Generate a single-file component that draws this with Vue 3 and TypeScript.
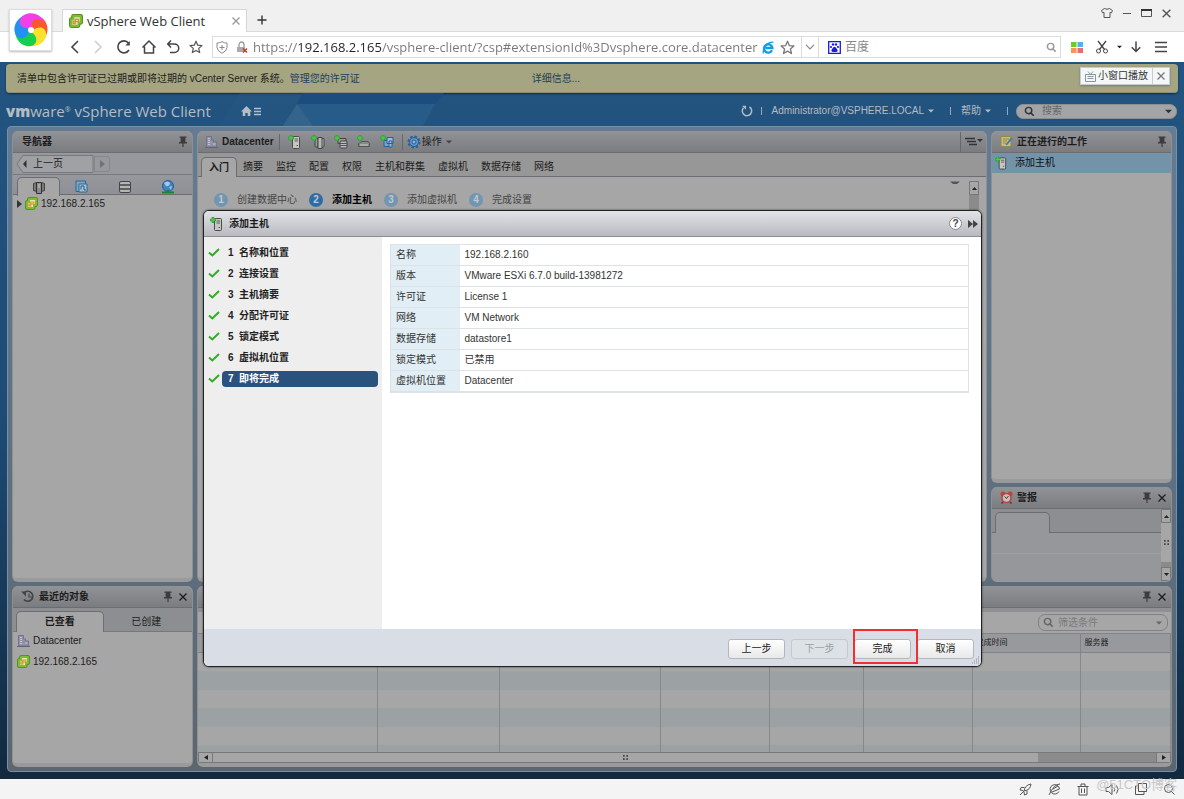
<script setup lang="ts">
import { ref } from 'vue'

interface Detail { label: string; value: string }
interface Petal { color: string; angle: number }

const url = ref('https://192.168.2.165/vsphere-client/?csp#extensionId%3Dvsphere.core.datacenter')
const steps: string[] = ['名称和位置', '连接设置', '主机摘要', '分配许可证', '锁定模式', '虚拟机位置', '即将完成']
const currentStep = ref(6)
const details: Detail[] = [
  { label: '名称', value: '192.168.2.160' },
  { label: '版本', value: 'VMware ESXi 6.7.0 build-13981272' },
  { label: '许可证', value: 'License 1' },
  { label: '网络', value: 'VM Network' },
  { label: '数据存储', value: 'datastore1' },
  { label: '锁定模式', value: '已禁用' },
  { label: '虚拟机位置', value: 'Datacenter' },
]
const tabs: string[] = ['入门', '摘要', '监控', '配置', '权限', '主机和群集', '虚拟机', '数据存储', '网络']
const activeTab = ref(0)
const guide: string[] = ['创建数据中心', '添加主机', '添加虚拟机', '完成设置']
const taskColumns: string[] = ['', '', '', '', '', '', '完成时间', '服务器']
const petals: Petal[] = [
  { color: '#f8582c', angle: 47 },
  { color: '#fbe02c', angle: 119 },
  { color: '#16cf4c', angle: 191 },
  { color: '#2292f2', angle: 263 },
  { color: '#f23fe6', angle: 335 },
]
</script>

<template>
  <div class="browser">
    <svg class="defs" width="0" height="0" aria-hidden="true">
      <symbol id="pin" viewBox="0 0 10 12"><path d="M1.5 .5h7v1.3H7.4v4.2H9v1.400H5.600V11H4.400V7.400H1V6h1.600V1.800H1.500z" fill="#3c3c3e" /></symbol>
      <symbol id="close" viewBox="0 0 10 10"><path d="M1.500 1.500l7 7M8.500 1.500l-7 7" stroke="currentColor" stroke-width="1.300" fill="none" /></symbol>
      <symbol id="lens" viewBox="0 0 12 12"><circle cx="5" cy="5" r="3.500" fill="none" stroke="currentColor" stroke-width="1.600" /><path d="M7.600 7.600l3 3" stroke="currentColor" stroke-width="1.800" /></symbol>
      <symbol id="vcenter" viewBox="0 0 13 13">
        <path d="M4 .5h7q1.500 0 1.500 1.500v6q0 1.500-1.500 1.500h-1V11q0 1.500-1.500 1.500H2Q.5 12.500.5 11V5Q.5 3.500 2 3.500h.5V2Q2.500.5 4 .5z" fill="#7fbc33" stroke="#56931c" />
        <path d="M5 3h5v4H8v3H3V6h2z" fill="#e9e2c4" /><path d="M3.800 9V7h2V5h3v2h-3v2z" fill="none" stroke="#dd9020" stroke-width="1.100" />
      </symbol>
      <symbol id="plus" viewBox="0 0 6 6"><path d="M3 0v6M0 3h6" stroke="#2a9a30" stroke-width="2.600" /><path d="M3 .6v4.800M.6 3h4.800" stroke="#4fc94c" stroke-width="1.300" /></symbol>
      <symbol id="host" viewBox="0 0 14 14">
        <rect x="4.500" y="1.500" width="7" height="12" rx="1" fill="#c6c6c2" stroke="#4a4a48" /><path d="M6.500 4h3.500M6.500 6h3.500M8.500 10.500h1.500" stroke="#5a5a58" /><use href="#plus" x="0" y="0" width="6" height="6" />
      </symbol>
      <symbol id="building" viewBox="0 0 13 13"><path d="M1.500 12V1.500h5V5h2v2h3v5z" fill="#9292a6" stroke="#73738a" /><path d="M3 3.500h2M3 5.500h2M3 7.500h2M3 9.500h2M8 9h2.500" stroke="#c4c4d0" /><path d="M0 12.500h13" stroke="#62627a" /></symbol>
      <symbol id="caret" viewBox="0 0 6 4"><path d="M0 .5h6L3 3.500z" fill="currentColor" /></symbol>
      <symbol id="grip" viewBox="0 0 6 6"><path d="M0 0h2v2H0zM4 0h2v2H4zM0 4h2v2H0zM4 4h2v2H4z" fill="#444" /></symbol>
      <symbol id="star" viewBox="0 0 14 14"><path d="M7 1.200l1.700 4 4.300.4-3.300 2.800 1 4.200L7 10.400l-3.700 2.200 1-4.200L1 5.600l4.300-.4z" fill="none" stroke="currentColor" stroke-width="1.200" stroke-linejoin="round" /></symbol>
    </svg>

    <header class="chrome">
      <div class="tabstrip">
        <button class="brand" aria-label="浏览器菜单">
          <svg width="36" height="36" viewBox="-18 -18 36 36">
            <path v-for="p in petals" :key="p.color" d="M-1 -2C-10 -6 -9 -15 0 -16.500C8 -17 15 -11 16 -1C12 -9 4 -10 2 -2z" :fill="p.color" :transform="`rotate(${p.angle})`" />
            <circle r="3" fill="#fff" />
          </svg>
        </button>
        <div class="page-tab">
          <svg width="14" height="14"><use href="#vcenter" /></svg>
          <span>vSphere Web Client</span>
          <button aria-label="关闭标签页"><svg width="10" height="10"><use href="#close" /></svg></button>
        </div>
        <button class="new-tab" aria-label="新建标签页"><svg width="10" height="10" viewBox="0 0 10 10"><path d="M5 .5v9M.5 5h9" stroke="#333" stroke-width="1.400" /></svg></button>
        <div class="window-tools">
          <button aria-label="皮肤"><svg width="12" height="12" viewBox="0 0 12 12"><path d="M3.500 1.500q2.500 1.600 5 0l3 2-1 2.300-1.500-.5v5.200H3V5.300l-1.500.5-1-2.300z" fill="none" stroke="#555" /></svg></button>
          <button aria-label="最小化"><svg width="10" height="12" viewBox="0 0 10 12"><path d="M1 6.500h8" stroke="#555" /></svg></button>
          <button aria-label="最大化"><svg width="11" height="12" viewBox="0 0 11 12"><path d="M.5 2.500h10v7H.5z" fill="none" stroke="#555" /><path d="M0 3h11" stroke="#333" stroke-width="2" /></svg></button>
          <button class="muted-dark" aria-label="关闭"><svg width="11" height="11"><use href="#close" /></svg></button>
        </div>
      </div>
      <div class="toolbar">
        <div class="nav-tools">
          <button aria-label="后退"><svg width="14" height="16" viewBox="0 0 14 16"><path d="M10 2L4 8l6 6" fill="none" stroke="#444" stroke-width="1.600" /></svg></button>
          <button aria-label="前进"><svg width="14" height="16" viewBox="0 0 14 16"><path d="M4 2l6 6-6 6" fill="none" stroke="#ccc" stroke-width="1.500" /></svg></button>
          <button class="reload" aria-label="刷新"><svg width="16" height="16" viewBox="0 0 16 16"><path d="M13 11A6 6 0 1 1 12.500 4" fill="none" stroke="#444" stroke-width="1.600" /><path d="M13.800 2v4.500H9.300z" fill="#444" /></svg></button>
          <button aria-label="主页"><svg width="16" height="16" viewBox="0 0 16 16"><path d="M1.500 8.500L8 2l6.500 6.500M3.500 7.500v6.500h9V7.500" fill="none" stroke="#444" stroke-width="1.500" /></svg></button>
          <button aria-label="恢复"><svg width="14" height="16" viewBox="0 0 14 16"><path d="M5 1.500L1.700 5 5 8.500M2 5h6.500a4.200 4.200 0 0 1 0 8.500H4" fill="none" stroke="#444" stroke-width="1.500" /></svg></button>
          <button class="muted-dark" aria-label="收藏夹"><svg width="14" height="14"><use href="#star" /></svg></button>
        </div>
        <div class="omnibox">
          <svg width="12" height="13" viewBox="0 0 12 13"><path d="M6 .7q2.500 1.500 5 1.300v4.500Q10.500 10.500 6 12.300 1.500 10.500 1 6.500V2q2.500.2 5-1.300z" fill="none" stroke="#888" /><path d="M6 4v5M3.500 6.500h5" stroke="#888" /></svg>
          <svg class="lock" width="12" height="13" viewBox="0 0 12 13"><path d="M3 6V4a2.500 3 0 0 1 5 0v2" fill="none" stroke="#999" stroke-width="1.300" /><rect x="1" y="6" width="8" height="5" fill="#aaa" /><path d="M7 7.500l4 4M11 7.500l-4 4" stroke="#e02a2a" stroke-width="1.400" /></svg>
          <input v-model="url" class="url" type="text" aria-label="网址" spellcheck="false">
          <svg width="12" height="13" viewBox="0 0 12 13"><path d="M10 9.300A4.200 4.200 0 1 1 10.400 7H3.500" fill="none" stroke="#139be8" stroke-width="2.300" /><path d="M11.500 1.300Q9 .5 5 3 1 6.500 1.200 12.500" fill="none" stroke="#139be8" stroke-width="1.200" /></svg>
          <button class="fav" aria-label="收藏"><svg width="15" height="15"><use href="#star" /></svg></button>
          <button class="expand" aria-label="展开"><svg width="10" height="6" viewBox="0 0 10 6"><path d="M1 .8l4 4 4-4" fill="none" stroke="#888" stroke-width="1.200" /></svg></button>
          <svg class="paw" width="13" height="13" viewBox="0 0 13 13"><path d="M.7.700h11.600v11.600H.7z" fill="#fff" stroke="#1a1ae6" stroke-width="1.300" /><g fill="#1a1ae6"><circle cx="3" cy="6" r="1.100" /><circle cx="5" cy="3.500" r="1.200" /><circle cx="8" cy="3.500" r="1.200" /><circle cx="10" cy="6" r="1.100" /><path d="M6.500 5.700q1.200 0 1.900 1.500l1.200 1.700q.3 2-1.500 2H4.900q-1.800 0-1.500-2l1.200-1.700q.7-1.500 1.900-1.500z" /></g></svg>
          <input class="engine" type="text" placeholder="百度" aria-label="百度搜索">
          <button class="go" aria-label="搜索"><svg width="11" height="11"><use href="#lens" /></svg></button>
        </div>
        <div class="ext-tools">
          <button aria-label="应用"><svg width="12" height="12" viewBox="0 0 12 12"><path d="M0 1h5.500v5H0z" fill="#6fcb1e" /><path d="M6.500 1H12v5H6.500z" fill="#4fb4ec" /><path d="M0 7h5.500v5H0z" fill="#f7945a" /><path d="M6.500 7H12v5H6.500z" fill="#ee6a78" /></svg></button>
          <button class="cut" aria-label="截图"><svg width="14" height="14" viewBox="0 0 14 14"><path d="M3 1l6.500 8.500M11 1L4.500 9.500" stroke="#444" stroke-width="1.300" /><circle cx="3.500" cy="11" r="2" fill="none" stroke="#444" /><circle cx="10.500" cy="11" r="2" fill="none" stroke="#444" /></svg></button>
          <button class="drop" aria-label="更多截图选项"><svg width="5" height="4"><use href="#caret" /></svg></button>
          <button class="down" aria-label="下载"><svg width="12" height="14" viewBox="0 0 12 14"><path d="M6 1.500v10M1.800 7.300L6 11.500l4.200-4.200" fill="none" stroke="#444" stroke-width="1.500" /></svg></button>
          <button class="menu" aria-label="菜单"><svg width="12" height="12" viewBox="0 0 12 12"><path d="M0 1.500h12M0 6h12M0 10.500h12" stroke="#444" stroke-width="1.500" /></svg></button>
        </div>
      </div>
    </header>

    <main class="app">
      <div class="notice">
        <span class="notice-text">清单中包含许可证已过期或即将过期的 vCenter Server 系统。</span>
        <a href="#licenses">管理您的许可证</a>
        <a class="more" href="#details">详细信息...</a>
      </div>

      <div class="masthead">
        <svg class="facets" viewBox="0 0 1184 33" preserveAspectRatio="none" aria-hidden="true">
          <path d="M240 0h63l-20 33h-63z" fill="#295b84" opacity=".4" /><path d="M303 0h141l-9 11H297z" fill="#1b4d7f" /><path d="M297 11h138l-12 22H283z" fill="#285c88" /><path d="M297 11l16 22h-30z" fill="#34648c" />
        </svg>
        <h1><b>vm</b>ware<sup>®</sup></h1>
        <span class="product">vSphere Web Client</span>
        <button class="home" aria-label="主页"><svg width="20" height="12" viewBox="0 0 20 12"><path d="M0 6.500L5.500 1 11 6.500H9.300V11H6.700V8H4.300v3H1.700V6.500z" fill="#b4bcc4" /><path d="M13 3.500h7M13 6.500h7M13 9.500h7" stroke="#b4bcc4" stroke-width="1.500" /></svg></button>
        <div class="session">
          <button aria-label="刷新"><svg width="12" height="12" viewBox="0 0 12 12"><path d="M8.500 2A4.700 4.700 0 1 1 2.500 2.800" fill="none" stroke="#b4bcc4" stroke-width="1.500" /><path d="M1 .8h4v4z" fill="#b4bcc4" /></svg></button>
          <i></i>
          <button class="user">Administrator@VSPHERE.LOCAL <svg width="6" height="4"><use href="#caret" /></svg></button>
          <i></i>
          <button class="help">帮助 <svg width="6" height="4"><use href="#caret" /></svg></button>
          <i></i>
          <label class="search"><svg width="11" height="11"><use href="#lens" /></svg><input type="search" placeholder="搜索" aria-label="搜索"><svg width="7" height="5"><use href="#caret" /></svg></label>
        </div>
      </div>

      <div class="frame">
        <section class="panel navigator">
          <header class="bar"><h2>导航器</h2><button class="tool" aria-label="固定"><svg width="10" height="12"><use href="#pin" /></svg></button></header>
          <div class="history">
            <button class="back"><svg width="78" height="18" viewBox="0 0 78 18" aria-hidden="true"><path d="M7 .5h70v17H7L1 9z" fill="#a0a1a4" stroke="#77787c" /><path d="M10.500 5v8L7 9z" fill="#333" /></svg><span>上一页</span></button>
            <button class="next" aria-label="前进" disabled><svg width="5" height="8" viewBox="0 0 5 8"><path d="M0 0l5 4-5 4z" fill="#717276" /></svg></button>
          </div>
          <div class="icon-tabs">
            <button class="on" aria-label="主机和群集"><svg width="12" height="13" viewBox="0 0 12 13"><path d="M.5 2.500l3-1v9l-3-1zM8.500 1.500l3 1v7l-3 1z" fill="#777" stroke="#444" /><path d="M3.500 1.500h5v11h-5z" fill="#8a8a8a" stroke="#333" /><path d="M5 4h2M5 6h2" stroke="#ccc" /></svg></button>
            <button aria-label="虚拟机和模板"><svg width="13" height="13" viewBox="0 0 13 13"><path d="M1 1h9.500v10.500H1z" fill="#7ba5c6" stroke="#2d688f" /><path d="M4 4h8v8H4z" fill="#a9c3d4" stroke="#2d688f" /><path d="M6 9.500V6h3v4h2" fill="none" stroke="#225e88" /></svg></button>
            <button aria-label="存储"><svg width="12" height="12" viewBox="0 0 12 12"><rect x=".5" y=".5" width="11" height="11" rx="1.500" fill="#b5b5b5" stroke="#444" /><path d="M1 4h10M1 8h10" stroke="#444" stroke-width="1.300" /></svg></button>
            <button aria-label="网络"><svg width="14" height="14" viewBox="0 0 14 14"><circle cx="7" cy="6" r="5.500" fill="#4383c4" stroke="#295b98" /><path d="M3 3q4-3 6 0-1 4-4 3zM8 7l3-1-1 4z" fill="#a5c9e7" /><path d="M1 12.500h12M7 10v3" stroke="#17872a" stroke-width="2" /></svg></button>
          </div>
          <ul class="objects tree"><li><svg width="5" height="8" viewBox="0 0 5 8"><path d="M0 0l5 4-5 4z" fill="#333" /></svg><svg width="13" height="13"><use href="#vcenter" /></svg>192.168.2.165</li></ul>
        </section>

        <section class="panel inventory">
          <header class="bar">
            <svg width="13" height="13"><use href="#building" /></svg><h2>Datacenter</h2><i></i>
            <div class="actions">
              <button aria-label="添加主机"><svg width="14" height="14"><use href="#host" /></svg></button>
              <button aria-label="新建群集"><svg width="14" height="14" viewBox="0 0 14 14"><path d="M4 3.500h3v9l-3-1z" fill="#999" stroke="#444" /><path d="M7 2.500h4v11H7zM11 3.500h2v8l-2 1" fill="#b7b7b7" stroke="#444" /><use href="#plus" width="6" height="6" /></svg></button>
              <button aria-label="新建数据存储"><svg width="14" height="14" viewBox="0 0 14 14"><path d="M4 3.500h8v5H4z" fill="#999" stroke="#444" /><rect x="6" y="6" width="7" height="7" rx="1" fill="#bbb" stroke="#444" /><path d="M6 8.500h7M6 10.500h7" stroke="#555" /><use href="#plus" width="6" height="6" /></svg></button>
              <button aria-label="新建交换机"><svg width="14" height="14" viewBox="0 0 14 14"><path d="M2 8.500l2-2h7l1.500 2v3h-11v-3z" fill="#888" stroke="#555" /><path d="M3 10h8" stroke="#ccc" /><use href="#plus" width="6" height="6" /></svg></button>
              <button aria-label="新建虚拟机"><svg width="14" height="14" viewBox="0 0 14 14"><path d="M4 5.500h6v6H4z" fill="#7ca2c4" stroke="#23639c" /><path d="M7 2.500h6v6H7zM9 6h3v6H9z" fill="#9dbbd4" stroke="#23639c" /><use href="#plus" width="6" height="6" /></svg></button>
            </div>
            <i></i>
            <button class="operate"><svg width="14" height="14" viewBox="-7 -7 14 14"><circle r="5" fill="none" stroke="#275f98" stroke-width="3" stroke-dasharray="2.200 1.700" /><circle r="4.500" fill="#5f97cb" stroke="#275f98" /><circle r="2" fill="#8fb2d2" stroke="#275f98" /></svg>操作<svg width="6" height="4"><use href="#caret" /></svg></button>
            <button class="view" aria-label="视图选项"><svg width="18" height="9" viewBox="0 0 18 9"><path d="M0 1.500h10M2 4.500h9M4 7.500h8" stroke="#333" stroke-width="1.300" /><path d="M12 2h6l-3 3z" fill="#333" /></svg></button>
          </header>
          <nav class="tabs"><button v-for="(t, i) in tabs" :key="t" :class="{ on: i === activeTab }" @click="activeTab = i">{{ t }}</button></nav>
          <div class="guide">
            <ol><li v-for="(g, i) in guide" :key="g" :class="{ on: i === 1 }"><b>{{ i + 1 }}</b>{{ g }}</li></ol>
            <svg class="fold" width="10" height="4" viewBox="0 0 10 4"><path d="M0 .5h10L7 3H3z" fill="#555" /></svg>
            <div class="vscroll"><span><svg width="5" height="3" viewBox="0 0 5 3"><path d="M0 3l2.500-3L5 3z" fill="#222" /></svg></span></div>
          </div>
        </section>

        <div class="side">
          <section class="panel work">
            <header class="bar"><svg width="13" height="13" viewBox="0 0 13 13"><path d="M1 1.500h10v10H1z" fill="#c9bf72" stroke="#8f8a4e" /><path d="M3 4h6M3 6h4M3 8h3" stroke="#8f8a4e" /><path d="M5.500 9.500l5.500-7 1.500 1.300-5.500 6.500z" fill="#3f79b0" /></svg><h2>正在进行的工作</h2><button class="tool" aria-label="固定"><svg width="10" height="12"><use href="#pin" /></svg></button></header>
            <ul><li><svg width="13" height="14"><use href="#host" /></svg>添加主机</li></ul>
          </section>
          <section class="panel alerts">
            <header class="bar"><svg width="13" height="13" viewBox="0 0 13 13"><circle cx="3" cy="3" r="2.500" fill="#b7463f" /><circle cx="10" cy="3" r="2.500" fill="#b7463f" /><path d="M3 11l-1.500 1.500M10 11l1.500 1.500" stroke="#7a2a26" stroke-width="1.500" /><circle cx="6.500" cy="7" r="4.500" fill="#c9c0bd" stroke="#b7463f" stroke-width="1.600" /><path d="M4.500 5.500l2 2 2-2.500" fill="none" stroke="#333" /></svg><h2>警报</h2><button class="tool" aria-label="固定"><svg width="10" height="12"><use href="#pin" /></svg></button><button class="shut" aria-label="关闭"><svg width="10" height="10"><use href="#close" /></svg></button></header>
            <div class="alert-body">
              <div class="alert-list"><div class="alert-tabs"><span></span></div><p></p></div>
              <div class="vscroll tall"><span><svg width="5" height="3" viewBox="0 0 5 3"><path d="M0 3l2.500-3L5 3z" fill="#222" /></svg></span><em><svg width="5" height="5"><use href="#grip" /></svg></em><span><svg width="5" height="3" viewBox="0 0 5 3"><path d="M0 0l2.500 3L5 0z" fill="#222" /></svg></span></div>
            </div>
          </section>
        </div>

        <section class="panel recent">
          <header class="bar"><svg width="14" height="13" viewBox="0 0 14 13"><path d="M3 3A5 5 0 1 1 3 9.500" fill="none" stroke="#444" stroke-width="1.700" /><path d="M0 1.500h5v5z" fill="#444" /><path d="M8 3.500v3.500h3" fill="none" stroke="#444" stroke-width="1.200" /></svg><h2>最近的对象</h2><button class="tool" aria-label="固定"><svg width="10" height="12"><use href="#pin" /></svg></button><button class="shut" aria-label="关闭"><svg width="10" height="10"><use href="#close" /></svg></button></header>
          <div class="recent-tabs"><button class="on">已查看</button><button>已创建</button></div>
          <ul class="objects"><li><svg width="13" height="13"><use href="#building" /></svg>Datacenter</li><li><svg width="13" height="13"><use href="#vcenter" /></svg>192.168.2.165</li></ul>
        </section>

        <section class="panel tasks">
          <header class="bar"><button class="tool" aria-label="固定"><svg width="10" height="12"><use href="#pin" /></svg></button><button class="shut" aria-label="关闭"><svg width="10" height="10"><use href="#close" /></svg></button></header>
          <div class="filter-row"><label class="filter"><svg width="11" height="11"><use href="#lens" /></svg><input type="search" placeholder="筛选条件" aria-label="筛选条件"><svg width="6" height="4"><use href="#caret" /></svg></label></div>
          <div class="grid-wrap">
            <table>
              <colgroup><col class="c18"><col class="c12"><col class="c16"><col class="c11"><col class="c9"><col class="c11"><col class="c11"><col></colgroup>
              <thead><tr><th v-for="(c, i) in taskColumns" :key="i" scope="col">{{ c }}</th></tr></thead>
              <tbody><tr v-for="r in 6" :key="r"><td v-for="(c, i) in taskColumns" :key="i"></td></tr></tbody>
            </table>
          </div>
          <div class="hscroll"><span><svg width="4" height="5" viewBox="0 0 4 5"><path d="M4 0v5L0 2.500z" fill="#222" /></svg></span><em><svg width="5" height="5"><use href="#grip" /></svg></em><div></div><span><svg width="4" height="5" viewBox="0 0 4 5"><path d="M0 0v5l4-2.500z" fill="#222" /></svg></span></div>
        </section>
      </div>

      <div class="mini-player">
        <button><svg width="11" height="11" viewBox="0 0 11 11"><path d="M.5 3.500h10v7H.5zM3 .5l2.500 3L8 .5M2.500 5.500h6M2.500 7.500h6" fill="none" stroke="#8796a0" /></svg>小窗口播放</button>
        <button class="x" aria-label="关闭"><svg width="10" height="10"><use href="#close" /></svg></button>
      </div>

      <div class="wizard" role="dialog" aria-labelledby="wizard-title">
        <header>
          <svg width="14" height="14"><use href="#host" /></svg><h2 id="wizard-title">添加主机</h2>
          <button class="q" aria-label="帮助">?</button>
          <button aria-label="收起"><svg width="10" height="8" viewBox="0 0 10 8"><path d="M0 0l5 4-5 4zM5 0l5 4-5 4z" fill="#444" /></svg></button>
        </header>
        <div class="wizard-body">
          <ol>
            <li v-for="(s, i) in steps" :key="s">
              <svg width="12" height="9" viewBox="0 0 12 9"><path d="M1 4.500l3.300 3L11 1" fill="none" stroke="#2fae22" stroke-width="2" /></svg>
              <button :class="{ on: i === currentStep }" @click="currentStep = i"><span>{{ i + 1 }}</span>{{ s }}</button>
            </li>
          </ol>
          <div class="summary">
            <table><tbody><tr v-for="d in details" :key="d.label"><th scope="row">{{ d.label }}</th><td>{{ d.value }}</td></tr></tbody></table>
          </div>
        </div>
        <footer>
          <button>上一步</button><button disabled>下一步</button><div class="marked"><button>完成</button></div><button>取消</button>
          <svg class="grip" width="9" height="9" viewBox="0 0 9 9"><path d="M7 1h1M5 3h1M7 3h1M3 5h1M5 5h1M7 5h1M1 7h1M3 7h1M5 7h1M7 7h1" stroke="#8b8f98" /></svg>
        </footer>
      </div>
    </main>

    <footer class="status">
      <button aria-label="加速"><svg width="13" height="13" viewBox="0 0 13 13"><path d="M5 8Q6 2 12 1q-.5 6-7 7zM5 8l-4 4M5.500 4.500H2L1 7l3 .5M8 7.500V11L5.500 12 5 9" fill="none" stroke="#555" /></svg></button>
      <button aria-label="内核"><svg width="13" height="13" viewBox="0 0 13 13"><path d="M11 8.500A4.700 4.700 0 1 1 11.500 6L4 9M12 1Q6 1 1 12M5 6l5-3" fill="none" stroke="#555" /></svg></button>
      <button aria-label="清理"><svg width="12" height="13" viewBox="0 0 12 13"><path d="M.5 3.500h11M4 3V1h4v2M2 3.500V12h8V3.500M4.500 5.500v4.500M7.500 5.500v4.500" fill="none" stroke="#555" /></svg></button>
      <button aria-label="声音"><svg width="14" height="13" viewBox="0 0 14 13"><path d="M1 4.500h2.500L7 1.500v10L3.500 8.500H1zM9 4.500q1.500 2 0 4M11.500 2.500q3 4 0 8" fill="none" stroke="#555" /></svg></button>
      <button aria-label="分屏"><svg width="12" height="12" viewBox="0 0 12 12"><path d="M3.500.5h8v8h-8zM3 3H.5v8.500H9V9" fill="none" stroke="#555" /></svg></button>
      <button aria-label="缩放"><svg width="12" height="12" viewBox="0 0 12 12"><circle cx="5.500" cy="5.500" r="4" fill="none" stroke="#555" /><path d="M8.500 8.500l3 3" stroke="#555" /></svg></button>
      <span class="credit">@51CTO博客</span>
    </footer>
  </div>
</template>

<style>
body { margin: 0; }
</style>

<style scoped>
.browser { display: flex; flex-direction: column; min-height: 100vh; font: 10px/16px "Liberation Sans", "Noto Sans CJK SC", sans-serif; color: #1c1c1c; }
.browser *, .browser *::after { box-sizing: border-box; }
.defs { position: absolute; }
svg { display: block; flex: none; }
button { font: inherit; color: inherit; background: none; border: 0; padding: 0; display: flex; align-items: center; justify-content: center; flex: none; }
input { font: inherit; color: inherit; background: none; border: 0; padding: 0; outline: 0; min-width: 0; }
h1, h2, ul, ol, p { margin: 0; padding: 0; list-style: none; font-size: inherit; }
a { color: inherit; text-decoration: none; }
table { border-collapse: collapse; table-layout: fixed; width: 100%; }

.tabstrip { position: relative; display: flex; height: 32px; padding-left: 62px; background: #f0f0f0; border-bottom: 1px solid #dadada; }
.brand { position: absolute; left: 9px; top: 9px; width: 43px; height: 42px; background: #fff; border: 1px solid #ddd; box-shadow: 0 1px 2px #bbb; z-index: 1; }
.page-tab { display: flex; align-items: center; width: 185px; height: 23px; margin-top: 9px; padding: 0 5px 0 6px; background: #fff; border: 1px solid #d6d6d6; border-bottom: 0; font: 13px/20px "Open Sans", sans-serif; color: #333; }
.page-tab span { flex: 1; margin-left: 4px; white-space: nowrap; }
.page-tab button { color: #999; }
.new-tab { width: 30px; margin-top: 9px; }
.window-tools { display: flex; gap: 9px; height: 12px; margin: 7px 12px 0 auto; }
.muted-dark { color: #555; }
.toolbar { display: flex; align-items: center; height: 30px; padding-right: 17px; background: #fff; }
.nav-tools { display: flex; align-items: center; gap: 9px; width: 212px; padding-left: 68px; }
.nav-tools .reload { margin-left: 2px; }
.omnibox { display: flex; align-items: center; flex: 1; height: 22px; border: 1px solid #dcdcdc; padding-left: 3px; min-width: 0; }
.lock { margin-left: 8px; }
.url { flex: 1; margin-left: 5px; font: 13px/20px "Open Sans", sans-serif; color: transparent; background: linear-gradient(90deg, #777 44px, #222 44px 129px, #777 129px); background-clip: text; -webkit-background-clip: text; }
.fav { margin-left: 6px; color: #777; }
.expand { width: 18px; height: 20px; margin: 0 9px 0 6px; border: 1px solid #dcdcdc; border-width: 0 1px; }
.engine { width: 195px; margin-left: 4px; font-size: 12px; }
.engine::placeholder { color: #888; }
.go { width: 18px; color: #999; margin-left: 2px; }
.ext-tools { display: flex; align-items: center; padding-left: 10px; }
.cut { margin-left: 12px; }
.drop { margin-left: 8px; }
.down { margin-left: 8px; }
.menu { margin-left: 13px; }

.app { position: relative; flex: 1; display: flex; flex-direction: column; background: linear-gradient(#235480, #1d4b75 50%, #12293f); }
.notice { display: flex; align-items: center; height: 29px; margin: 2px 6px 0; padding: 0 11px; background: #a6a582; border-radius: 4px; box-shadow: 0 1px 2px #0c2b48, inset 0 -1px #8e8e70; white-space: nowrap; }
.notice a { color: #1d3f60; }
.notice a.more { margin-left: 172px; }
.masthead { position: relative; display: flex; align-items: center; height: 33px; padding: 3px 7px 0 6px; color: #b4bcc4; }
.facets { position: absolute; left: 0; top: 0; width: 100%; height: 33px; z-index: 0; }
.masthead > :not(.facets) { position: relative; }
h1 { font: 400 15px/20px "Open Sans", sans-serif; white-space: nowrap; }
h1 b { font-weight: 800; }
h1 sup { font-size: 7px; line-height: 8px; vertical-align: 5px; }
.product { margin-left: 4px; font: 15px/20px "Open Sans", sans-serif; white-space: nowrap; }
.home { margin-left: 30px; }
.session { display: flex; align-items: center; margin-left: auto; white-space: nowrap; }
.session i { width: 1px; height: 8px; background: #9ba8b4; margin: 0 8px; }
.session button svg { margin-left: 4px; }
.user { margin-right: 8px; margin-left: 2px; }
.help { margin-right: 8px; margin-left: 2px; }
.search { display: flex; align-items: center; width: 161px; height: 15px; padding: 0 4px 0 7px; background: #a3a4a5; border: 1px solid #8a8f94; border-radius: 7px; color: #333; }
.search input { flex: 1; margin-left: 7px; }
.search input::placeholder { color: #666; }

.frame { flex: 1; display: grid; grid-template-columns: 181px minmax(0, 1fr) 181px; grid-template-rows: minmax(0, 1fr) 181px; gap: 4px; margin: 0 7px 7px; padding: 4px; background: linear-gradient(#637c94, #5b6670); border: 1px solid #7890a6; border-radius: 4px; min-height: 400px; }
.panel { display: flex; flex-direction: column; min-width: 0; background: #a6a6a6; border: 1px solid #8f9092; border-top: 0; border-bottom: 4px solid #9a9a9a; border-radius: 6px; overflow: hidden; }
.bar { display: flex; align-items: center; height: 22px; flex: none; padding: 0 4px 0 8px; background: linear-gradient(#929396, #7b7c7f); border-bottom: 1px solid #6c6d70; }
.bar h2 { font-weight: 700; white-space: nowrap; }
.tool { margin-left: auto; }
.shut { margin-left: 5px; }
.bar > svg + h2 { margin-left: 4px; }
.navigator .bar h2 { margin-left: 1px; }
.history { display: flex; align-items: center; height: 21px; padding-left: 3px; background: #97989d; }
.back { position: relative; width: 78px; height: 18px; }
.back svg { position: absolute; left: 0; }
.back span { position: relative; margin-left: -14px; }
.next { width: 16px; height: 16px; border: 1px solid #85868a; border-radius: 0 3px 3px 0; }
.icon-tabs { display: flex; height: 21px; padding: 2px 4px 0; background: linear-gradient(#97989d, #8f9095); border-top: 1px solid #77787c; border-bottom: 1px solid #6c6d70; }
.icon-tabs button { width: 43px; height: 19px; }
.icon-tabs .on, .recent-tabs .on { background: #a6a6a6; border: 1px solid #6c6d70; border-bottom: 0; border-radius: 5px 5px 0 0; }
.objects li { display: flex; align-items: center; height: 17px; margin-bottom: 4px; padding-left: 4px; gap: 3px; }
.inventory .bar { padding: 0 3px 0 7px; }
.inventory .bar i { width: 1px; height: 16px; background: #67686b; margin-left: 5px; }
.actions { display: flex; gap: 9px; margin: 0 3px 0 8px; }
.operate { margin-left: 4px; gap: 1px; }
.operate svg:last-child { margin-left: 3px; color: #444; }
.view { margin-left: auto; height: 20px; padding-left: 4px; border-left: 1px solid #67686b; }
.tabs { display: flex; height: 24px; flex: none; padding: 4px 3px 0; background: #979797; border-bottom: 1px solid #6c6d70; }
.tabs button { margin-left: 13px; white-space: nowrap; }
.tabs .on { width: 36px; height: 20px; margin: 0 -7px 0 0; background: #a6a6a6; border: 1px solid #6c6d70; border-bottom: 0; border-radius: 5px 5px 0 0; font-weight: 700; }
.guide { display: flex; flex: 1; padding: 4px 7px 0 16px; }
.guide ol { display: flex; flex: 1; gap: 12px; height: 38px; white-space: nowrap; }
.guide li { display: flex; align-items: center; gap: 9px; color: #444; }
.guide li b { width: 14px; height: 14px; border-radius: 50%; background: #7295b0; color: #c0c8d0; text-align: center; line-height: 14px; }
.guide .on { color: #000; font-weight: 700; }
.guide .on b { background: #2e6da3; }
.vscroll { display: flex; flex-direction: column; width: 10px; background: #8b8b8b; }
.vscroll span { display: flex; align-items: center; justify-content: center; height: 14px; background: #a6a6a6; border: 1px solid #777; }
.fold { margin: 0 9px 0 0; }
.side { display: flex; flex-direction: column; gap: 4px; min-height: 0; }
.work { flex: 1; }
.work li { display: flex; align-items: center; gap: 7px; height: 20px; padding-left: 3px; background: #7393a8; color: #111; }
.alerts { height: 95px; border-bottom-width: 1px; background: #96979b; }
.alert-body { display: flex; flex: 1; }
.alert-list { flex: 1; }
.alert-tabs { height: 24px; padding: 3px 3px 0; background: #8d8e92; border-bottom: 1px solid #6c6d70; }
.alert-tabs span { display: block; width: 55px; height: 21px; background: #96979b; border: 1px solid #6c6d70; border-bottom: 0; border-radius: 5px 5px 0 0; }
.alert-list p { height: 21px; border-bottom: 1px solid #9fa0a4; }
.tall em { flex: 1; display: flex; align-items: center; justify-content: center; background: #a6a6a6; margin-bottom: 5px; }
.recent-tabs { display: flex; height: 24px; flex: none; padding: 3px 3px 0; background: #8d8e92; border-bottom: 1px solid #77787c; }
.recent-tabs button { flex: 1; height: 21px; }
.recent-tabs .on { font-weight: 700; }
.tasks { grid-column: 2 / 4; }
.filter-row { display: flex; justify-content: flex-end; height: 25px; flex: none; padding: 2px 3px 0; border-top: 4px solid #8f9094; }
.filter { display: flex; align-items: center; width: 130px; height: 17px; padding: 0 5px 0 4px; border: 1px solid #808184; border-radius: 7px; color: #666; }
.filter input { flex: 1; margin-left: 4px; }
.filter input::placeholder { color: #7b7b7b; }
.grid-wrap { flex: 1; min-height: 0; overflow: hidden; }
.c18 { width: 18.5%; } .c12 { width: 12.5%; } .c16 { width: 16.6%; } .c11 { width: 11.2%; } .c9 { width: 9.6%; }
.tasks th { height: 19px; padding: 0 3px; border: 1px solid #828386; border-width: 1px 1px 1px 0; background: #98999c; font-size: 8px; font-weight: 400; line-height: 12px; text-align: left; }
.tasks td { height: 18px; padding: 0; border-right: 1px solid #87888a; }
.tasks tr:nth-child(even) td { height: 19px; background: #9ca1a4; }
.hscroll { display: flex; height: 11px; flex: none; border: 1px solid #77787a; background: #8b8b8b; }
.hscroll span { display: flex; align-items: center; justify-content: center; width: 14px; background: #a6a6a6; border-right: 1px solid #77787a; }
.hscroll span:last-child { border-left: 1px solid #77787a; border-right: 0; }
.hscroll em { display: flex; align-items: center; justify-content: center; flex: 7; background: #a6a6a6; }
.hscroll div { flex: 1; }

.mini-player { position: absolute; top: 5px; right: 14px; display: flex; height: 18px; background: #f4f6f8; border: 1px solid #c6cdd2; box-shadow: 0 1px 2px #777; color: #333; }
.mini-player button { gap: 2px; padding: 0 4px; }
.mini-player .x { width: 17px; padding: 0; border-left: 1px solid #c6cdd2; color: #777; }

.wizard { position: absolute; top: 148px; right: 202px; bottom: 112px; left: 203px; display: flex; flex-direction: column; background: #fff; border: 1px solid #222; border-radius: 6px; overflow: hidden; box-shadow: 0 0 2px #333; }
.wizard > header { display: flex; align-items: center; height: 26px; flex: none; padding: 0 3px 0 6px; background: linear-gradient(#e2e3e7, #b8babf); border-bottom: 1px solid #8c8d90; }
.wizard h2 { margin: 0 auto 0 5px; font-weight: 700; }
.wizard .q { width: 13px; height: 13px; margin-right: 6px; border: 1px solid #888; border-radius: 50%; background: #fff; color: #444; font-weight: 700; line-height: 11px; }
.wizard-body { display: flex; flex: 1; min-height: 0; }
.wizard ol { width: 178px; flex: none; padding: 5px 4px 0; background: #eee; }
.wizard li { display: flex; align-items: center; height: 21px; gap: 2px; color: #222; }
.wizard li button { flex: 1; justify-content: flex-start; height: 16px; padding-left: 6px; border-radius: 4px; font-weight: 700; }
.wizard li button span { width: 11px; text-align: left; }
.wizard li .on { background: #29527f; color: #fff; }
.summary { flex: 1; padding: 7px 12px 0 8px; }
.summary table { border: 1px solid #dfe2e4; border-bottom-width: 2px; color: #333; }
.summary th { width: 69px; background: #e2eef5; font-weight: 400; text-align: left; }
.summary th, .summary td { height: 21px; padding: 0 5px; border-bottom: 1px solid #dfe2e4; }
.wizard footer { position: relative; display: flex; align-items: flex-start; justify-content: flex-end; gap: 6px; height: 37px; flex: none; padding: 10px 7px 0; background: #d9dee6; }
.wizard footer button { width: 57px; height: 20px; background: linear-gradient(#fff, #e8e8ea); border: 1px solid #b4b7bc; border-radius: 3px; color: #222; }
.wizard footer button:disabled { background: #dce2e6; border-color: #c3c9ce; color: #9aa0a4; }
.marked { position: relative; z-index: 1; }
.marked::after { content: ""; position: absolute; inset: -10px -7px -5px -1px; border: 2px solid #f03030; pointer-events: none; }
.grip { position: absolute; right: 1px; bottom: 1px; }

.status { position: relative; display: flex; align-items: center; justify-content: flex-end; gap: 16px; height: 20px; padding-right: 9px; background: #f4f4f4; }
.credit { position: absolute; right: 7px; top: -2px; font-size: 13px; line-height: 16px; color: #c8c8c8; }
</style>
